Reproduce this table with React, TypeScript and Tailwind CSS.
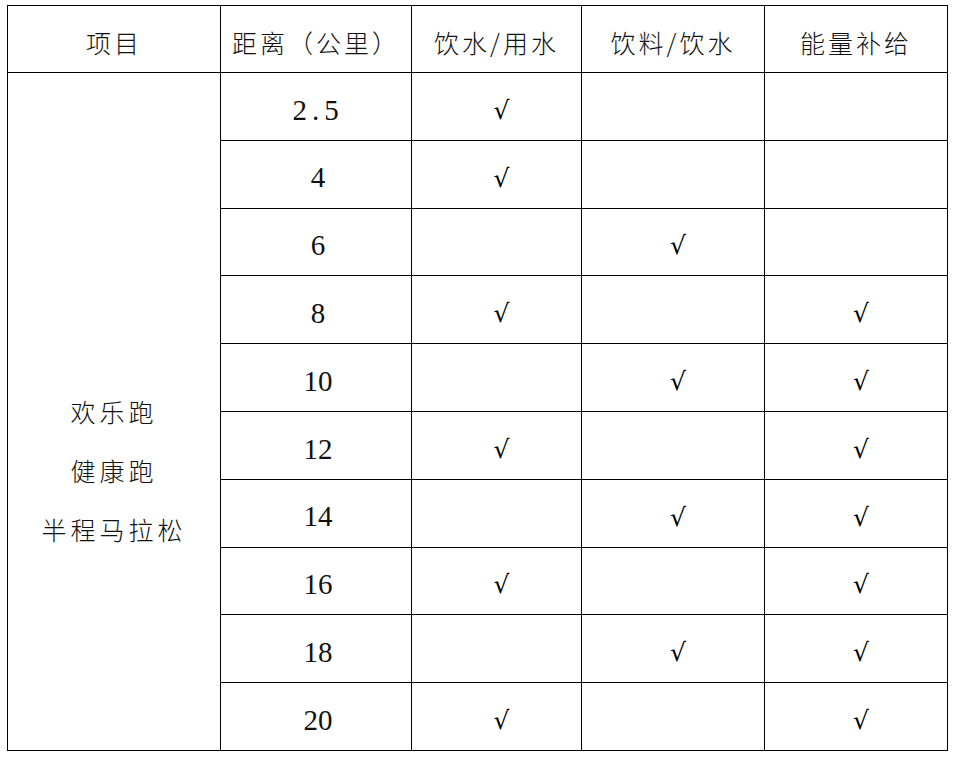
const rows = [
  { km: "2.5", water: true, drink: false, energy: false },
  { km: "4", water: true, drink: false, energy: false },
  { km: "6", water: false, drink: true, energy: false },
  { km: "8", water: true, drink: false, energy: true },
  { km: "10", water: false, drink: true, energy: true },
  { km: "12", water: true, drink: false, energy: true },
  { km: "14", water: false, drink: true, energy: true },
  { km: "16", water: true, drink: false, energy: true },
  { km: "18", water: false, drink: true, energy: true },
  { km: "20", water: true, drink: false, energy: true },
];

const cjk = "font-['Noto_Sans_CJK_SC',sans-serif]";

function Check({ on }: { on: boolean }) {
  if (!on) return null;
  return (
    <span className="inline-block pl-[10px] pt-[10px] font-['DejaVu_Sans',sans-serif] text-[25px] leading-none text-black">
      √
    </span>
  );
}

export default function App() {
  return (
    <div className="h-[758px] w-[955px] bg-white pl-[7px] pt-[5px] text-[#111]">
      <table className="w-[940px] table-fixed border-collapse">
        <colgroup>
          <col className="w-[213px]" />
          <col className="w-[191px]" />
          <col className="w-[170px]" />
          <col className="w-[183px]" />
          <col className="w-[183px]" />
        </colgroup>
        <thead>
          <tr className={`h-[67px] ${cjk} text-[25px] tracking-[3px]`}>
            <th className="border border-black pt-2 font-light">项目</th>
            <th className="border border-black pt-2 font-light">距离（公里）</th>
            <th className="border border-black pt-2 font-light">饮水/用水</th>
            <th className="border border-black pt-2 font-light">饮料/饮水</th>
            <th className="border border-black pt-2 font-light">能量补给</th>
          </tr>
        </thead>
        <tbody>
          {rows.map((r, i) => (
            <tr key={r.km} className="h-[67.8px]">
              {i === 0 && (
                <td rowSpan={rows.length} className="border border-black pt-[118px] text-center align-middle">
                  <div className={`flex flex-col items-center gap-[26px] ${cjk} text-[25px] font-light leading-[33px] tracking-[4px]`}>
                    <span>欢乐跑</span>
                    <span>健康跑</span>
                    <span>半程马拉松</span>
                  </div>
                </td>
              )}
              <td className={`border border-black pt-2 pl-1 text-center [font-family:'Liberation_Serif',serif] text-[29px] font-normal ${r.km === "2.5" ? "tracking-[5px]" : ""}`}>
                {r.km}
              </td>
              <td className="border border-black text-center">
                <Check on={r.water} />
              </td>
              <td className="border border-black text-center">
                <Check on={r.drink} />
              </td>
              <td className="border border-black text-center">
                <Check on={r.energy} />
              </td>
            </tr>
          ))}
        </tbody>
      </table>
    </div>
  );
}
